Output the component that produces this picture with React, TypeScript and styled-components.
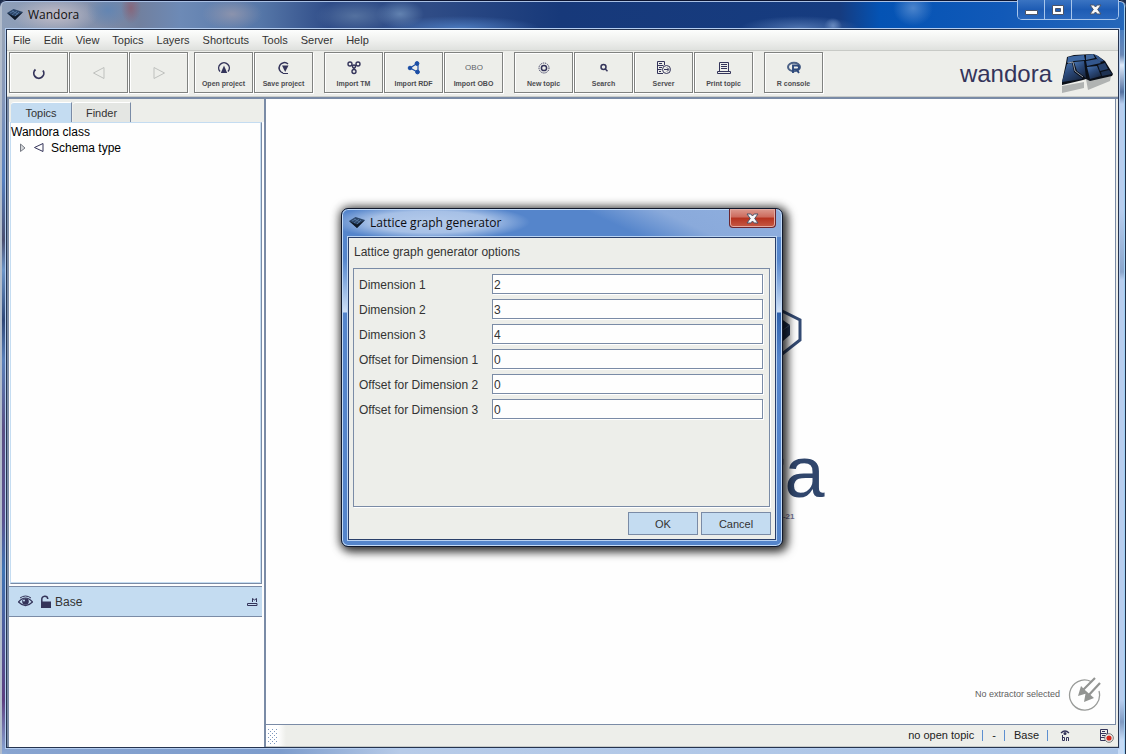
import React from 'react';
import styled, { createGlobalStyle } from 'styled-components';

const ink = '#34345a';
const line = '#7a8ba6';
const panel = '#edeeea';
const sky = '#c4dcf1';
const sans = '"Liberation Sans", Arial, sans-serif';
const caption = '"Open Sans", "Noto Sans", sans-serif';

const Global = createGlobalStyle`
  *, *::before, *::after { box-sizing: border-box; }
  html, body { margin: 0; background: #1c2b4a; }
  body { font: 12px/16px ${sans}; color: #333; }
  button, input { font: inherit; color: inherit; margin: 0; padding: 0; border-radius: 0; }
  svg { display: block; flex: none; }
`;

/* ---------- main window frame ---------- */

const Frame = styled.div`
  position: relative;
  min-height: 100vh;
  display: flex;
  flex-direction: column;
  padding: 0 7px 6px 6px;
  border-radius: 6px 6px 0 0;
  box-shadow: inset 0 1px 0 #0c1430, inset 0 2px 0 #a9c0e4, inset -1px 0 0 #20304a, inset -2px 0 0 #9fd0f4, inset 2px 0 0 #b3bdcc;
  background:
    radial-gradient(ellipse 30px 16px at 232px 14px, #8b93ad, transparent),
    radial-gradient(ellipse 10px 16px at 131px 8px, #86677c, transparent),
    radial-gradient(ellipse 22px 18px at 108px 10px, #6385b2, transparent),
    radial-gradient(ellipse 44px 18px at 55px 15px, #c2bdc8, transparent),
    radial-gradient(ellipse 40px 16px at 355px 16px, #54719f, transparent),
    radial-gradient(ellipse 24px 14px at 400px 14px, #6282b0, transparent),
    radial-gradient(ellipse 80px 12px at 460px 28px, #4a78bc, transparent),
    radial-gradient(ellipse 60px 12px at 800px 28px, #4d72ae, transparent),
    radial-gradient(ellipse 9px 8px at 833px 26px, #7a9acb, transparent),
    radial-gradient(ellipse 20px 18px at 913px 8px, #4b84cc, transparent),
    linear-gradient(90deg, #8e9fb9 0, #8a97b0 70px, #71809f 140px, #6d8ab6 180px, #5677a8 260px, #2f4c88 330px, #2f4c86 430px, #17397a 560px, #163c80 840px, #0453b4 880px, #1159b8 1000px, #2667b9 1126px) top / 100% 30px no-repeat,
    linear-gradient(180deg, #9aa6b8 30px, #8496b8 100px, #557fc0 180px, #4b4f70 240px, #6c95c8 270px, #2f4777 320px, #5980ba 360px, #5a4f84 430px, #5a5290 520px, #3f74b4 570px, #5c3f80 700px, #8aa9d6 754px) left / 7px 100% no-repeat,
    linear-gradient(180deg, #4b7dbe 30px, #6a88b6 55px, #dfeafa 65px, #53709f 92px, #b8ceef 104px, #b8ceef 210px, #8ba6cc 272px, #b8ceef 280px, #b8ceef 700px, #7f9ac2 722px, #c6dbf6 740px) right / 8px 100% no-repeat,
    linear-gradient(90deg, #88a4d0, #7d9ccc 280px, #b7cbe8 400px, #a9c3e6);
`;

const TitleBar = styled.header`
  height: 29px;
  display: flex;
  align-items: flex-start;
  color: #101010;
  font: 12px/16px ${caption};
`;

const TitleText = styled.h1`
  display: flex;
  align-items: center;
  gap: 4px;
  flex: 1;
  margin: 0;
  padding: 7px 0 0 1px;
  font: inherit;
`;

const WindowControls = styled.div`
  display: flex;
  height: 20px;
  border: 1px solid #a8c6ec;
  border-top: 0;
  border-radius: 0 0 5px 5px;
  overflow: hidden;
`;

const WindowButton = styled.button<{ $wide?: boolean }>`
  display: grid;
  place-items: center;
  width: ${p => (p.$wide ? 46 : 27)}px;
  border: 0;
  border-right: ${p => (p.$wide ? '0' : '1px solid #a8c6ec')};
  background: linear-gradient(#3a74c2, #1e5cb4 50%, #2a68bd);
`;

const Client = styled.div`
  flex: 1;
  display: flex;
  flex-direction: column;
  min-width: 0;
  border: 1px solid #26344f;
  outline: 1px solid #b4cdf0;
  background: ${panel};
`;

const MenuBar = styled.nav`
  display: flex;
  align-items: flex-start;
  gap: 13px;
  height: 21px;
  padding: 0 6px;
  border-bottom: 1px solid #c8cac6;
  background: linear-gradient(#fdfefd, #f0f1ef 50%, #dfe1de);
`;

const MenuItem = styled.button`
  border: 0;
  background: none;
  font-size: 11px;
  line-height: 20px;
`;

const ToolBar = styled.div`
  display: flex;
  align-items: flex-start;
  gap: 11px;
  height: 48px;
  padding: 1px 2px 0;
  border-bottom: 2px solid ${line};
  box-shadow: inset 0 -1px 0 #c9ccca;
`;

const ToolGroup = styled.div<{ $tight?: boolean }>`
  display: flex;
  gap: 1px;
  margin-right: ${p => (p.$tight ? '-5px' : '0')};
`;

const ToolButton = styled.button`
  display: flex;
  flex-direction: column;
  align-items: center;
  justify-content: center;
  gap: 2px;
  width: 59px;
  height: 41px;
  padding-top: 2px;
  border: 1px solid #808280;
  box-shadow: inset 1px 1px 0 #fff, 1px 1px 0 #fff;
  background: ${panel};
  font: bold 7px/10px ${sans};
  color: #4c4c50;
`;

const Brand = styled.div`
  display: flex;
  align-items: center;
  gap: 8px;
  margin-left: auto;
  padding-right: 2px;
  color: ${ink};
  font-size: 24px;
  line-height: 28px;
`;

/* ---------- work area ---------- */

const Workspace = styled.main`
  flex: 1;
  display: grid;
  grid-template-columns: 257px 1fr;
`;

const SidePane = styled.aside`
  display: flex;
  flex-direction: column;
  border-left: 2px solid ${line};
  background: #fefefe;
`;

const Tabs = styled.div`
  display: flex;
  gap: 1px;
  align-items: flex-end;
  height: 23px;
  padding-left: 2px;
  background: ${panel};
`;

const Tab = styled.button<{ $active?: boolean }>`
  width: ${p => (p.$active ? 61 : 58)}px;
  height: 20px;
  border: 0;
  border-right: 1px solid ${line};
  border-top: 1px solid #fff;
  border-radius: 3px 0 0 0;
  background: ${p => (p.$active ? sky : '#e4e6e3')};
  font-size: 11px;
  line-height: ${p => (p.$active ? 16 : 20)}px;
`;

const Tree = styled.div`
  flex: 1;
  margin: 0 2px 2px 1px;
  border: 1px solid ${sky};
  border-right-color: ${line};
  border-bottom-color: ${line};
  box-shadow: inset -1px -1px 0 ${sky};
  color: #000;
`;

const TreeRow = styled.div<{ $child?: boolean }>`
  display: flex;
  align-items: center;
  gap: 6px;
  height: 16px;
  padding-left: ${p => (p.$child ? 7 : 0)}px;
  padding-top: 2px;
`;

const LayerList = styled.section`
  height: 161px;
  margin-right: 2px;
  border-top: 1px solid ${line};
`;

const Layer = styled.div`
  display: flex;
  align-items: center;
  height: 30px;
  padding: 1px 4px 0 9px;
  gap: 7px;
  border-bottom: 1px solid ${line};
  background: ${sky};
`;

const LayerName = styled.span`
  display: flex;
  align-items: center;
  gap: 4px;
  flex: 1;
`;

const MainPane = styled.section`
  display: flex;
  flex-direction: column;
  border-left: 2px solid ${line};
`;

const Canvas = styled.div`
  flex: 1;
  display: flex;
  flex-direction: column;
  align-items: center;
  margin-right: 2px;
  border-right: 1px solid ${line};
  border-bottom: 1px solid ${line};
  background: #fefefe;
`;

const Splash = styled.div`
  display: flex;
  flex-direction: column;
  align-items: flex-end;
  flex: 1;
  width: 268px;
  padding-top: 206px;
  color: #30466c;
`;

const Emblem = styled.div`
  padding-right: 23px;
`;

const Wordmark = styled.div`
  margin-top: 67px;
  font-size: 72px;
  line-height: 80px;
`;

const BuildDate = styled.div`
  padding-right: 30px;
  font: bold 8px/10px ${sans};
  color: #77779a;
`;

const Extractor = styled.div`
  align-self: flex-end;
  display: flex;
  align-items: center;
  gap: 8px;
  padding: 0 13px 13px;
  color: #606060;
  font-size: 9px;
`;

const StatusBar = styled.footer`
  display: flex;
  align-items: center;
  height: 22px;
  padding-right: 4px;
  border-bottom: 1px solid #c9ccca;
  background: linear-gradient(90deg, #fff 12px, ${panel} 20px);
  color: #222;
  font-size: 11px;
`;

const Grip = styled.span`
  width: 11px;
  height: 16px;
  margin: 0 auto 0 1px;
  background:
    linear-gradient(#7c97bd, #7c97bd) 0 0 / 100% 100%;
  mask:
    conic-gradient(from 90deg at 3px 3px, #000 25%, transparent 0) 0 0 / 4px 4px,
    conic-gradient(from 90deg at 3px 3px, #000 25%, transparent 0) 2px 2px / 4px 4px;
`;

const Status = styled.span`
  padding: 0 8px 0 9px;
  border-right: 1px solid #5d8fd0;
  line-height: 11px;
`;

const StatusIcons = styled.span`
  display: flex;
  align-items: center;
  gap: 29px;
  padding-left: 12px;
`;

/* ---------- dialog ---------- */

const Overlay = styled.div`
  position: absolute;
  inset: 0;
  display: grid;
  place-items: center;
  padding: 1px 2px 0 0;
`;

const Dialog = styled.div`
  width: 442px;
  padding: 0 6px 6px;
  border: 1px solid #10182c;
  border-radius: 7px;
  box-shadow: inset 0 0 0 1px #c3dbf7, 3px 3px 10px 2px rgba(0, 0, 0, 0.7), 0 0 10px 2px rgba(0, 0, 0, 0.4);
  background:
    radial-gradient(ellipse 100px 18px at 88px 13px, #b5cbeb, #a6c0e6 60%, transparent),
    linear-gradient(180deg, transparent 50px, #7fa6dc 70px, #cfe0f6 103px, #2f62ac 104px, #5585cb 150px, transparent 160px) right / 7px 100% no-repeat,
    linear-gradient(180deg, transparent 50px, #7fa6dc 70px, #cfe0f6 103px, #5585cb 104px, transparent 160px) left / 7px 100% no-repeat,
    linear-gradient(25deg, transparent 60%, #8aaadb 75%, #8fafdf) top / 100% 28px no-repeat,
    #5585cb;
`;

const DialogTitle = styled.div`
  display: flex;
  justify-content: space-between;
  height: 28px;
  color: #0c0c10;
  font: 12px/16px ${caption};
`;

const DialogName = styled.h2`
  display: flex;
  align-items: center;
  gap: 4px;
  margin: 0;
  padding-left: 1px;
  font: inherit;
`;

const CloseButton = styled.button`
  display: grid;
  place-items: center;
  width: 47px;
  height: 19px;
  border: 1px solid #6a2630;
  border-top: 0;
  border-radius: 0 0 4px 4px;
  box-shadow: inset 0 0 0 1px #e3a9a0;
  background: linear-gradient(#dc9a8f, #cc6a5c 45%, #b5321f 50%, #c65a45);
`;

const DialogBody = styled.form`
  padding: 0 4px 4px;
  border: 1px solid #2a3f6a;
  outline: 1px solid #b9d3f3;
  background: ${panel};
`;

const Intro = styled.p`
  margin: 0 0 2px;
  padding-left: 1px;
  line-height: 28px;
`;

const Options = styled.div`
  display: grid;
  grid-template-columns: 133px 1fr;
  align-content: start;
  row-gap: 5px;
  min-height: 239px;
  margin-right: 1px;
  padding: 5px 6px 5px 5px;
  border: 1px solid ${line};
  box-shadow: 1px 1px 0 #fff;
`;

const FieldLabel = styled.label`
  line-height: 22px;
  height: 20px;
`;

const Field = styled.input`
  width: 100%;
  height: 20px;
  padding: 2px 1px 0;
  border: 1px solid ${line};
  box-shadow: 1px 1px 0 #fff;
  background: #fefefe;
  outline: none;
`;

const Actions = styled.div`
  display: flex;
  justify-content: flex-end;
  gap: 3px;
  margin-top: 5px;
`;

const ActionButton = styled.button`
  width: 70px;
  height: 23px;
  padding-top: 1px;
  border: 1px solid ${line};
  background: ${sky};
  font-size: 11px;
  line-height: 20px;
`;

/* ---------- drawings ---------- */

const AppIcon = () => (
  <svg width="17" height="14" viewBox="0 0 17 14">
    <path d="M0 5 6.500 1 16 4 8 12Z" fill="#2b4568" />
    <path d="M0 5 8 12 16 4 8 8.500Z" fill="#101a28" />
    <path d="M3 5 7 3M5 7l5-4M8 8l4-4M5 3l6 3" stroke="#5f83ad" strokeWidth=".7" />
  </svg>
);

const CrossGlyph = () => (
  <svg width="13" height="11" viewBox="0 0 13 11">
    <path d="M1 1h3.800L6.500 3 8.200 1H12L8.700 5.500 12 10H8.200L6.500 8 4.800 10H1L4.300 5.500Z" fill="#f8f8f8" stroke="#4c5468" />
  </svg>
);

const icons: Record<string, React.ReactNode> = {
  reload: <path d="M5.500 4.500A5 5 0 1 0 13 5.500" fill="none" stroke={ink} strokeWidth="1.800" />,
  back: <path d="M14 2.500v11L3.500 8Z" fill="none" stroke="#bfc1be" />,
  forward: <path d="M4 2.500v11L14.500 8Z" fill="none" stroke="#bfc1be" />,
  open: <><path d="M5 12.500A5.300 5.300 0 1 1 13 12.500" fill="none" stroke={ink} strokeWidth="1.500" /><path d="M9 6.500l3.200 7.500H5.800Z" fill={ink} /></>,
  save: <><path d="M8 14A5.300 5.300 0 1 1 13 5" fill="none" stroke={ink} strokeWidth="1.500" /><path d="M7 6.500h6.500L10.200 13Z" fill={ink} /><path d="M8 14.500h5" stroke={ink} /></>,
  tm: <g fill="none" stroke={ink} strokeWidth="1.400"><circle cx="5" cy="5" r="2" /><circle cx="13" cy="5" r="2" /><circle cx="9" cy="12.500" r="2" /><circle cx="9" cy="7.500" r="1.500" /><path d="M6.500 6 8 7M11.500 6 10 7M9 9v1.500" /></g>,
  rdf: <g fill="#1b4ea6" stroke="#1b4ea6"><circle cx="5" cy="9" r="1.800" /><circle cx="12" cy="4.500" r="1.900" /><circle cx="12.500" cy="13" r="1.900" /><path d="M5 9l7-4.500M5 9l7.500 4M13 5v8" fill="none" strokeWidth="1.200" /></g>,
  topic: <g fill="none" stroke={ink}><circle cx="9" cy="9" r="2.600" strokeWidth="1.500" /><circle cx="9" cy="9" r="5" strokeDasharray="1.200 .8" /></g>,
  search: <g fill="none" stroke={ink} strokeWidth="1.500"><circle cx="8.500" cy="8" r="2.500" /><path d="M10.300 10l2.200 2.200" /></g>,
  server: <g fill="none" stroke={ink}><path d="M8 14.500H2.500v-12h7V6M2.500 6.500h6M2.500 10.500h4M4 4.500h3M4 8.500h3M4 12.500h2" /><circle cx="11.500" cy="10.500" r="4" fill={panel} /><path d="M9 10.500h4.500M12 8.500l2 2-2 2" /></g>,
  print: <g fill="none" stroke={ink}><path d="M4.500 12V3.500h9V12M6 5.500h6M6 7.500h6M6 9.500h6" /><path d="M2.500 12.500h13v2h-13Z" /></g>,
  r: <><ellipse cx="9" cy="8" rx="6" ry="4.200" fill="none" stroke="#4b6186" strokeWidth="2" /><path d="M8 14V6.500h4a2 2 0 0 1 0 4H8M11.500 10.500l2.500 3.500" fill="none" stroke="#2e4a7c" strokeWidth="1.900" /></>,
};

const ToolIcon = ({ name }: { name: string }) =>
  name === 'obo' ? (
    <svg width="18" height="18" viewBox="0 0 18 18">
      <text x="9" y="11" textAnchor="middle" fontFamily={sans} fontSize="8" fontWeight="400" fill="#606468">OBO</text>
    </svg>
  ) : (
    <svg width="18" height="18" viewBox="0 0 18 18">{icons[name]}</svg>
  );

const BrandMark = () => (
  <svg width="54" height="44" viewBox="0 0 54 44">
    <defs>
      <linearGradient id="slab" x1="0" y1="0" x2=".6" y2="1">
        <stop offset="0" stopColor="#4a77b3" />
        <stop offset=".5" stopColor="#2c4b7c" />
        <stop offset="1" stopColor="#1a2b48" />
      </linearGradient>
    </defs>
    <path d="M2 34 24 30v6L2 41ZM26 27l25-3-1 5-22 9Z" fill="#b0b3b2" />
    <path d="M2 33 2 30 6 11 7 5 14 3 33 2l5 2 7 5 8 13-1 2-22 5-4-2-3 1Z" fill="#0a0f18" />
    <path d="M2 30 7 12l5-1 2 9 8 6v1Z" fill="url(#slab)" />
    <path d="M8 5l6-1 10-1 1 5-11 1-7 2Z" fill="#3e68a2" />
    <path d="M14 10l10-1 2 17-9-7Z" fill="url(#slab)" />
    <path d="M26 3l7-1 2 4-9 2Z" fill="#41689d" />
    <path d="M26 9l11-2 4 4-14 3Z" fill="#33578e" />
    <path d="M27 15l10-1 4 10-11 3Z" fill="url(#slab)" />
    <path d="M34 2l4 2 6 5-5 1Z" fill="#35588c" />
    <path d="M38 13l7-2 3 6-8 2Z" fill="#27426d" />
    <path d="M41 20l8-2 3 4-10 2Z" fill="#1d3152" />
    <path d="M8 11l5-1 2 9 8 6" fill="none" stroke="#b6c2d2" strokeWidth=".8" />
  </svg>
);

const Hexagon = () => (
  <svg width="60" height="60" viewBox="0 0 60 60">
    <path d="M30 1 58 15v20L30 57 4 43V15Z" fill="none" stroke="#334a73" strokeWidth="3" />
    <path d="M20 25 38 13 48 20v10L34 42 20 36Z" fill="#22324e" />
    <path d="M34 30 48 20" stroke="#4b5f80" />
  </svg>
);

const ExtractorIcon = () => (
  <svg width="34" height="34" viewBox="0 0 34 34">
    <path d="M23 4.500A15 15 0 1 0 31 14" fill="none" stroke="#999b99" strokeWidth="1.300" />
    <path d="M27 1 14 14M32 6 19 20" stroke="#929492" strokeWidth="2.200" />
    <path d="M13 9l-3 10 10-3ZM18 14l-2 11 10-4Z" fill="#929492" />
  </svg>
);

const EyeIcon = () => (
  <svg width="15" height="14" viewBox="0 0 15 14">
    <path d="M.5 7Q7.500-1 14.500 7 7.500 14 .5 7Z" fill="none" stroke={ink} strokeWidth="1.200" />
    <circle cx="7.500" cy="6.500" r="3.300" fill={ink} />
    <circle cx="6" cy="5.500" r="1" fill={sky} />
    <path d="M2 3Q7.500-1 13 3" fill="none" stroke={ink} />
  </svg>
);

const LockIcon = () => (
  <svg width="11" height="14" viewBox="0 0 11 14">
    <path d="M1.800 7V4.500a3 3 0 0 1 6-.5" fill="none" stroke={ink} strokeWidth="1.500" />
    <path d="M1 6.500h10V13H1Z" fill={ink} />
  </svg>
);

const LayerMark = () => (
  <svg width="11" height="10" viewBox="0 0 11 10">
    <path d="M5.500 5V1.500L7.500 3l2-1.500V5M.5 6.500h9.500v2H.5Z" fill="none" stroke={ink} />
  </svg>
);

const TriangleRight = () => (
  <svg width="9" height="10" viewBox="0 0 9 10"><path d="M2.500 1v7.500L7 5Z" fill="#d6d8dc" stroke="#777b84" /></svg>
);

const TriangleLeft = () => (
  <svg width="12" height="10" viewBox="0 0 12 10"><path d="M10 .5v8L1.500 4.500Z" fill="none" stroke={ink} /></svg>
);

const PanelStatus = () => (
  <svg width="10" height="12" viewBox="0 0 10 12">
    <path d="M1 3Q5-1 9 3" fill="none" stroke={ink} strokeWidth="1.300" />
    <circle cx="5" cy="3.500" r="1.500" fill={ink} />
    <path d="M2.500 5v5.500h2v-3h-2M6.500 11V7.500h2V11" fill="none" stroke={ink} />
  </svg>
);

const ServerStatus = () => (
  <svg width="15" height="14" viewBox="0 0 15 14">
    <path d="M7 11.500H1.500V.5h7V6M1.500 4.500h6M1.500 8.500h5M3 2.500h3M3 6.500h3" fill="none" stroke={ink} />
    <circle cx="10" cy="9" r="4.300" fill="#f2f2f0" stroke="#777" />
    <circle cx="10" cy="9" r="2.600" fill="#d4281c" />
  </svg>
);

/* ---------- data ---------- */

const menus = ['File', 'Edit', 'View', 'Topics', 'Layers', 'Shortcuts', 'Tools', 'Server', 'Help'];

const tools: { icon: string; label?: string; title?: string }[][] = [
  [{ icon: 'reload', title: 'Reload' }, { icon: 'back', title: 'Back' }, { icon: 'forward', title: 'Forward' }],
  [{ icon: 'open', label: 'Open project' }, { icon: 'save', label: 'Save project' }],
  [{ icon: 'tm', label: 'Import TM' }, { icon: 'rdf', label: 'Import RDF' }, { icon: 'obo', label: 'Import OBO' }],
  [{ icon: 'topic', label: 'New topic' }, { icon: 'search', label: 'Search' }, { icon: 'server', label: 'Server' }, { icon: 'print', label: 'Print topic' }],
  [{ icon: 'r', label: 'R console' }],
];

const fields = [
  ['Dimension 1', '2'],
  ['Dimension 2', '3'],
  ['Dimension 3', '4'],
  ['Offset for Dimension 1', '0'],
  ['Offset for Dimension 2', '0'],
  ['Offset for Dimension 3', '0'],
];

export default function App() {
  return (
    <Frame>
      <Global />
      <TitleBar>
        <TitleText><AppIcon />Wandora</TitleText>
        <WindowControls>
          <WindowButton aria-label="Minimize">
            <svg width="13" height="10" viewBox="0 0 13 10"><path d="M.5 5.500h12v4H.5Z" fill="#fff" stroke="#4c5468" /></svg>
          </WindowButton>
          <WindowButton aria-label="Maximize">
            <svg width="12" height="10" viewBox="0 0 12 10"><path d="M.5.500h11v9H.5ZM3.500 3.500v3h5v-3Z" fill="#fff" fillRule="evenodd" stroke="#4c5468" /></svg>
          </WindowButton>
          <WindowButton $wide aria-label="Close"><CrossGlyph /></WindowButton>
        </WindowControls>
      </TitleBar>
      <Client>
        <MenuBar>{menus.map(m => <MenuItem key={m}>{m}</MenuItem>)}</MenuBar>
        <ToolBar>
          {tools.map((group, i) => (
            <ToolGroup key={i} $tight={i === 0}>
              {group.map(t => (
                <ToolButton key={t.icon} aria-label={t.label ?? t.title}>
                  <ToolIcon name={t.icon} />
                  {t.label}
                </ToolButton>
              ))}
            </ToolGroup>
          ))}
          <Brand>wandora<BrandMark /></Brand>
        </ToolBar>
        <Workspace>
          <SidePane>
            <Tabs>
              <Tab $active>Topics</Tab>
              <Tab>Finder</Tab>
            </Tabs>
            <Tree>
              <TreeRow>Wandora class</TreeRow>
              <TreeRow $child><TriangleRight /><TriangleLeft />Schema type</TreeRow>
            </Tree>
            <LayerList>
              <Layer>
                <EyeIcon />
                <LayerName><LockIcon />Base</LayerName>
                <LayerMark />
              </Layer>
            </LayerList>
          </SidePane>
          <MainPane>
            <Canvas>
              <Splash>
                <Emblem><Hexagon /></Emblem>
                <Wordmark>ra</Wordmark>
                <BuildDate>-21</BuildDate>
              </Splash>
              <Extractor>No extractor selected<ExtractorIcon /></Extractor>
            </Canvas>
            <StatusBar>
              <Grip />
              <Status>no open topic</Status>
              <Status>-</Status>
              <Status>Base</Status>
              <StatusIcons><PanelStatus /><ServerStatus /></StatusIcons>
            </StatusBar>
          </MainPane>
        </Workspace>
      </Client>
      <Overlay>
        <Dialog role="dialog" aria-labelledby="dialog-name">
          <DialogTitle>
            <DialogName id="dialog-name"><AppIcon />Lattice graph generator</DialogName>
            <CloseButton aria-label="Close dialog"><CrossGlyph /></CloseButton>
          </DialogTitle>
          <DialogBody onSubmit={e => e.preventDefault()}>
            <Intro>Lattice graph generator options</Intro>
            <Options>
              {fields.map(([label, value], i) => (
                <React.Fragment key={label}>
                  <FieldLabel htmlFor={`field-${i}`}>{label}</FieldLabel>
                  <Field id={`field-${i}`} defaultValue={value} />
                </React.Fragment>
              ))}
            </Options>
            <Actions>
              <ActionButton type="submit">OK</ActionButton>
              <ActionButton type="button">Cancel</ActionButton>
            </Actions>
          </DialogBody>
        </Dialog>
      </Overlay>
    </Frame>
  );
}
